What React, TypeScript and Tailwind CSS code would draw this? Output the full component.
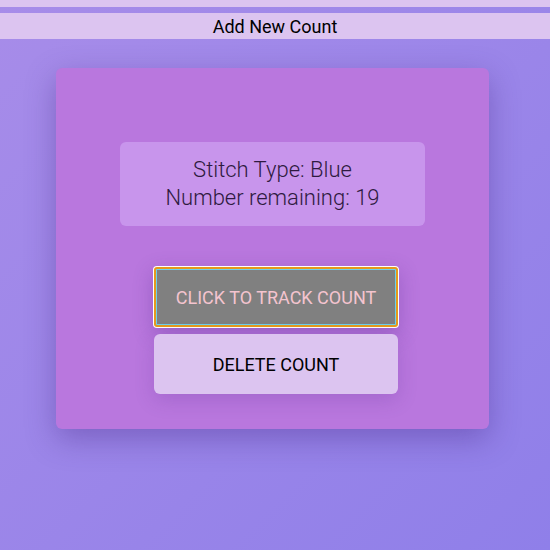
export default function App() {
  return (
    <div className="w-[550px] h-[550px] overflow-hidden bg-gradient-to-br from-[#a78ce9] to-[#8f7fe9] font-['Roboto',Arial,sans-serif]">
      <div className="h-[7px] bg-[#dcc4f0]" />
      <div className="mt-[6px] h-[26px] bg-[#dcc4f0] flex items-center justify-center text-[18px] text-black">
        Add New Count
      </div>
      <div className="mt-[29px] ml-[56px] w-[433px] h-[361px] rounded-md bg-[#b977de] shadow-[0_10px_30px_rgba(60,30,120,0.35)] flex flex-col items-center">
        <div className="mt-[74px] w-[305px] h-[84px] rounded-md bg-[#c895ec] flex flex-col items-center justify-center text-[22px] leading-[28px] font-light text-[#2e1a40]">
          <span>Stitch Type: Blue</span>
          <span>Number remaining: 19</span>
        </div>
        <button className="mt-[40px] ml-[7px] w-[246px] h-[62px] rounded-[4px] bg-white p-[1px] shadow-[0_6px_20px_rgba(80,40,140,0.3)]">
          <div className="w-full h-full rounded-[3px] bg-[#e59a1c] p-[2px]">
            <div className="w-full h-full bg-[#6ad0ee] p-[1px] rounded-[1px]">
              <div className="w-full h-full bg-[#808080] flex items-center justify-center text-[18px] text-[#f4c4cf]">
                CLICK TO TRACK COUNT
              </div>
            </div>
          </div>
        </button>
        <button className="mt-[6px] ml-[7px] w-[244px] h-[60px] rounded-md bg-[#dcc4f0] flex items-center justify-center text-[18px] text-black shadow-[0_6px_20px_rgba(80,40,140,0.2)]">
          DELETE COUNT
        </button>
      </div>
    </div>
  );
}
